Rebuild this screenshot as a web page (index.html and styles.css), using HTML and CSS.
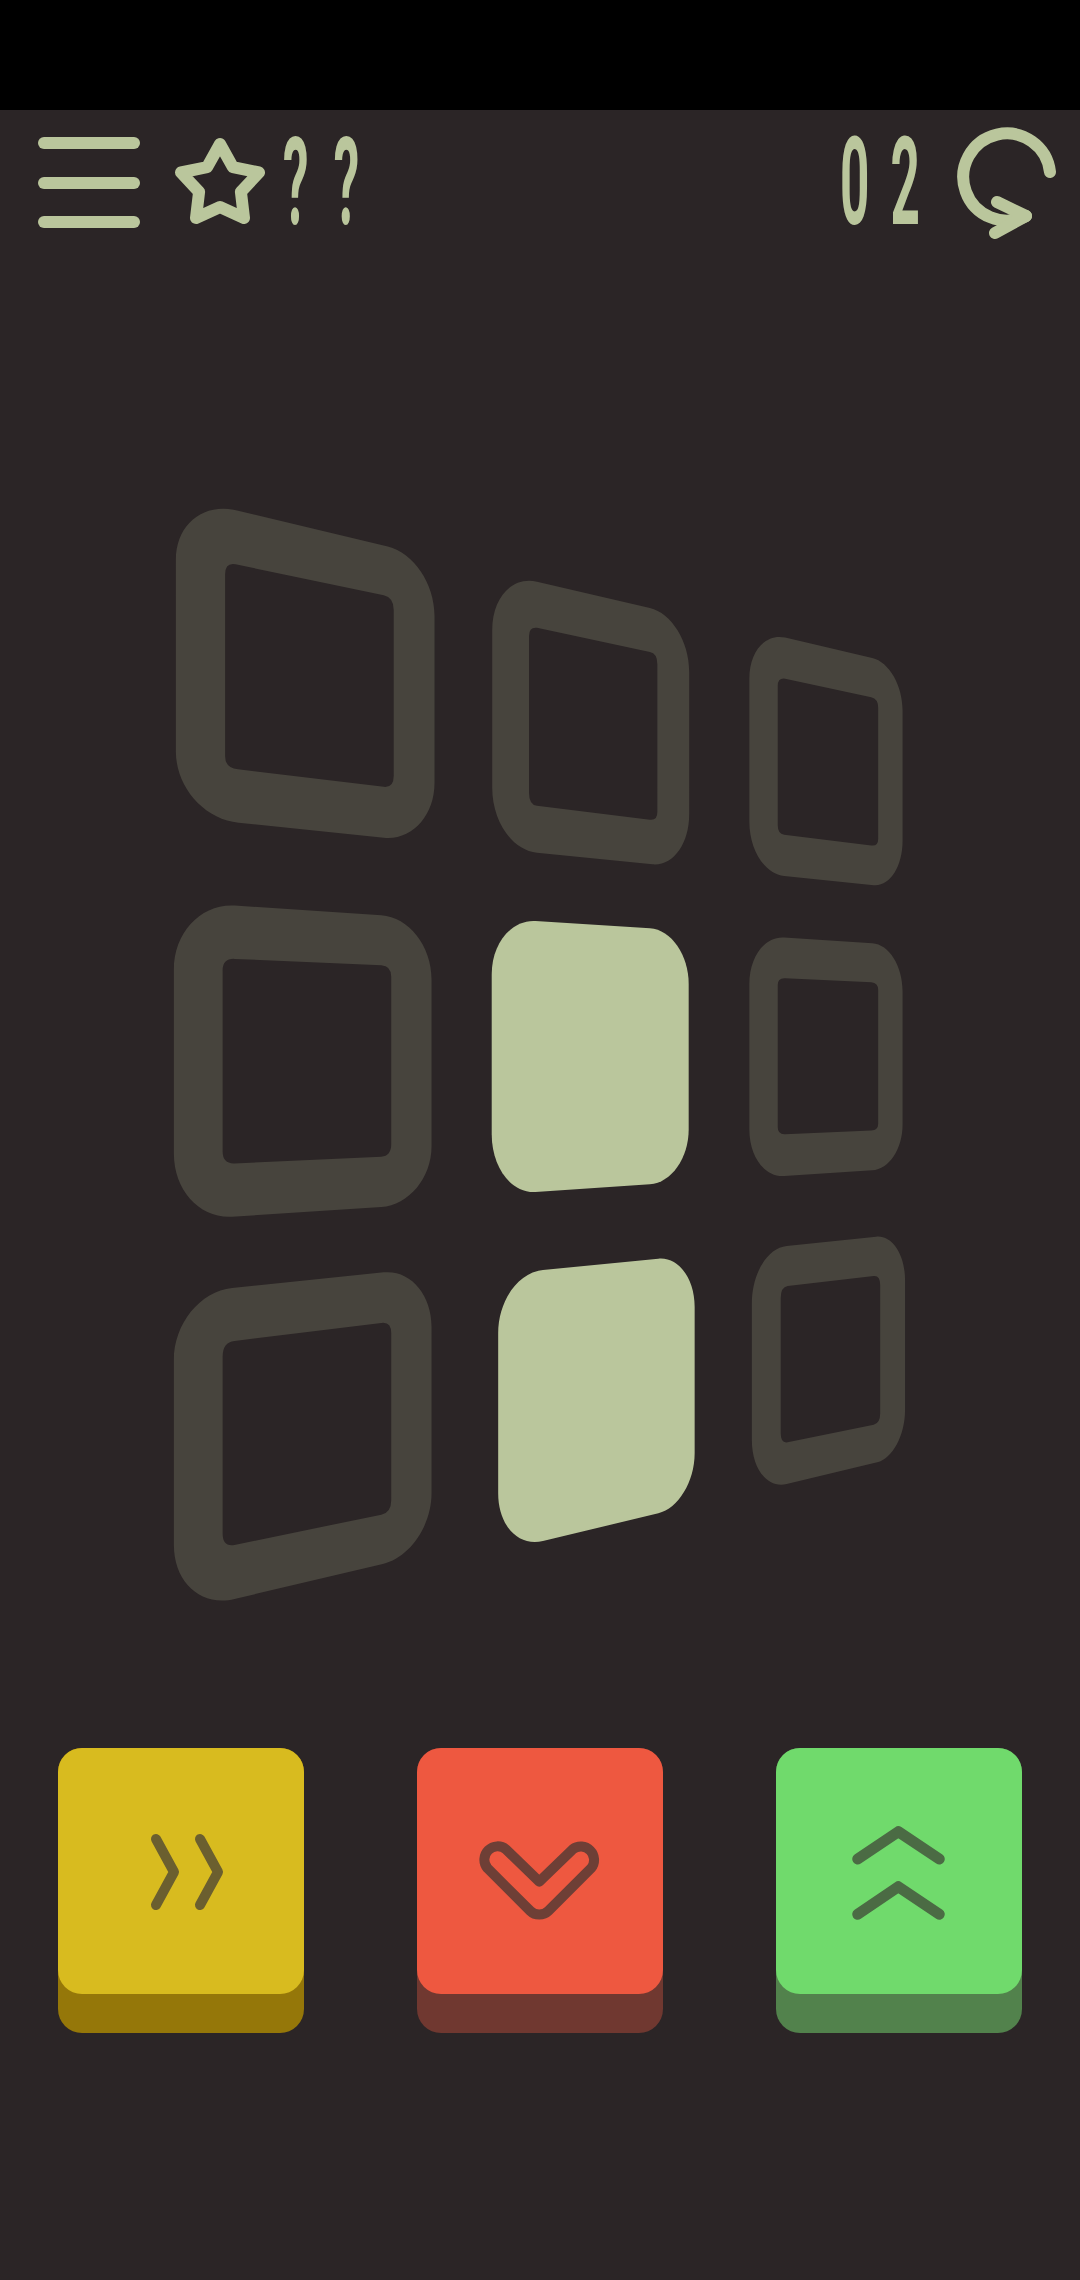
FILE: index.html
```html
<!DOCTYPE html>
<html lang="en">
<head>
    <meta charset="UTF-8">
    <meta name="viewport" content="width=device-width, initial-scale=1.0">
    <title>Cube puzzle</title>
    <link rel="stylesheet" href="styles.css">
</head>
<body>
    <div class="status-bar"></div>

    <header class="top-bar">
        <div class="top-left">
            <div class="menu-icon">
                <span></span>
                <span></span>
                <span></span>
            </div>
            <svg class="star-icon" viewBox="0 0 100 100">
                <path d="M50 11L62.9 34.2L89 39.5L70.9 58.8L74 85L50 74L26 85L29.1 58.8L11 39.5L37.1 34.2Z"/>
            </svg>
            <div class="slim-text best">??</div>
        </div>
        <div class="top-right">
            <div class="slim-text moves">02</div>
            <svg class="reset-icon" viewBox="0 0 110 125">
                <path d="M100 52A43.5 43.5 0 1 0 76 96"/>
                <path d="M47 82L76 96L45 113"/>
            </svg>
        </div>
    </header>

    <svg class="board" viewBox="0 0 780 1160">
        <g transform="scale(.4974 .4847)">
            <!-- first row -->
            <path class="tile" d="M52 165C52 92 107 46 175 63L478 137C530 150 572 214 572 280V625C572 693 526 744 470 738L178 707C109 700 52 634 52 560Z M151 195Q151 170 172 174L470 238Q490 243 490 268V610Q490 635 470 633L177 597Q151 594 151 570Z"/>
            <path class="tile" d="M688 310C688 243 728 198 778 210L1005 264C1048 274 1084 333 1084 395V690C1084 751 1051 797 1010 793L778 769C728 764 688 704 688 635Z M762 322Q762 303 778 305L1005 355Q1020 358 1020 380V685Q1020 703 1005 701L778 672Q762 670 762 645Z"/>
            <path class="tile" d="M1205 410C1205 354 1237 316 1277 325L1452 367C1486 375 1513 424 1513 475V745C1513 798 1487 839 1455 836L1275 817C1236 813 1205 763 1205 705Z M1262 425Q1262 408 1277 410L1450 448Q1464 451 1464 470V740Q1464 756 1450 754L1275 732Q1262 730 1262 712Z"/>
            <!-- second row -->
            <path class="tile" d="M48 1010C48 933 103 874 170 878L465 898C520 902 566 961 566 1030V1375C566 1440 520 1496 465 1500L165 1520C101 1524 48 1466 48 1390Z M146 1012Q146 987 170 988L465 1001Q485 1002 485 1025V1370Q485 1395 465 1396L170 1410Q146 1411 146 1385Z"/>
            <path class="tile lit" d="M687 1020C687 956 727 907 775 910L1005 925C1048 928 1083 980 1083 1040V1340C1083 1399 1048 1450 1005 1453L775 1469C727 1472 687 1419 687 1350Z"/>
            <path class="tile" d="M1205 1040C1205 984 1236 941 1275 944L1452 956C1486 958 1513 1003 1513 1055V1330C1513 1380 1486 1422 1452 1424L1275 1436C1236 1439 1205 1396 1205 1340Z M1262 1042Q1262 1027 1277 1028L1450 1036Q1464 1037 1464 1052V1328Q1464 1341 1450 1342L1277 1350Q1262 1351 1262 1335Z"/>
        </g>
        <g transform="translate(0 740) scale(.4974 .3333)">
            <!-- third row -->
            <path class="tile" d="M48 420C48 311 101 214 165 204L470 157C523 149 566 222 566 320V820C566 918 522 1013 468 1032L170 1137C103 1161 48 1088 48 975Z M146 410Q146 367 170 363L465 309Q485 305 485 340V840Q485 878 465 884L170 975Q146 982 146 940Z"/>
            <path class="tile lit" d="M700 340C700 243 740 157 790 150L1022 116C1062 110 1095 175 1095 260V700C1095 785 1062 866 1022 880L790 963C740 981 700 916 700 820Z"/>
            <path class="tile" d="M1210 250C1210 161 1241 84 1280 78L1460 50C1492 45 1518 104 1518 180V570C1518 645 1493 716 1462 727L1280 792C1241 806 1210 746 1210 660Z M1268 235Q1268 201 1282 198L1455 168Q1468 166 1468 195V580Q1468 610 1455 614L1282 667Q1268 671 1268 640Z"/>
        </g>
    </svg>

    <div class="controls">
        <div class="key key-yellow">
            <div class="key-face">
                <svg viewBox="0 0 246 246">
                    <path d="M98 91L116 124L98 157"/>
                    <path d="M142 91L160 124L142 157"/>
                </svg>
            </div>
        </div>
        <div class="key key-red">
            <div class="key-face">
                <svg viewBox="0 0 246 246">
                    <path d="M122.3 133.7L89 101.3A13.3 13.3 0 0 0 70.3 120L113.2 162.9A13 13 0 0 0 131.4 162.9L174.3 120A13.3 13.3 0 0 0 155.7 101.3Z"/>
                </svg>
            </div>
        </div>
        <div class="key key-green">
            <div class="key-face">
                <svg viewBox="0 0 246 246">
                    <path d="M81.7 111L122.3 83.7L163.3 111"/>
                    <path d="M81.7 166.3L122.3 138.7L163.3 166.3"/>
                </svg>
            </div>
        </div>
    </div>
</body>
</html>
```

FILE: styles.css
```css
* {
    margin: 0;
    padding: 0;
    box-sizing: border-box;
}

body {
    width: 1080px;
    height: 2280px;
    overflow: hidden;
    background-color: #2b2526;
}

.status-bar {
    height: 110px;
    background-color: #000000;
}

.top-bar {
    height: 145px;
    padding: 0 20px 0 38px;
    display: flex;
    justify-content: space-between;
    align-items: center;
}

.top-left,
.top-right {
    display: flex;
    align-items: center;
}

.menu-icon {
    width: 102px;
    height: 91px;
    display: flex;
    flex-direction: column;
    justify-content: space-between;
}

.menu-icon span {
    height: 12px;
    border-radius: 6px;
    background-color: #bac69c;
}

.star-icon {
    width: 100px;
    height: 100px;
    margin-left: 30px;
    fill: none;
    stroke: #bac69c;
    stroke-width: 12;
    stroke-linejoin: round;
}

.slim-text {
    width: 80px;
    height: 125px;
    font-family: Roboto, sans-serif;
    font-size: 122px;
    font-weight: 700;
    line-height: 125px;
    color: #bac69c;
    white-space: nowrap;
    transform-origin: left center;
    transform: scaleX(0.42);
}

.best {
    margin-left: 13px;
    letter-spacing: 60px;
}

.moves {
    width: 110px;
    letter-spacing: 50px;
}

.reset-icon {
    width: 110px;
    height: 125px;
    fill: none;
    stroke: #bac69c;
    stroke-width: 12;
    stroke-linecap: round;
    stroke-linejoin: round;
}

.board {
    display: block;
    width: 780px;
    height: 1160px;
    margin: 225px 0 0 150px;
}

.tile {
    fill: #47443d;
    fill-rule: evenodd;
}

.tile.lit {
    fill: #bac69c;
}

.controls {
    margin-top: 108px;
    padding: 0 58px;
    display: flex;
    justify-content: space-between;
}

.key {
    width: 246px;
    height: 285px;
    border-radius: 24px;
}

.key-face {
    height: 246px;
    border-radius: 24px;
}

.key-face svg {
    display: block;
    width: 246px;
    height: 246px;
    fill: none;
    stroke-width: 10;
    stroke-linecap: round;
    stroke-linejoin: round;
}

.key-yellow {
    background-color: #957709;
}

.key-yellow .key-face {
    background-color: #d8bb1f;
}

.key-yellow svg {
    stroke: #6b5f2f;
}

.key-red {
    background-color: #703830;
}

.key-red .key-face {
    background-color: #ee5840;
}

.key-red svg {
    stroke: #6e3f36;
}

.key-green {
    background-color: #52824c;
}

.key-green .key-face {
    background-color: #70da6c;
}

.key-green svg {
    stroke: #4b6b44;
    stroke-width: 11;
}
```
